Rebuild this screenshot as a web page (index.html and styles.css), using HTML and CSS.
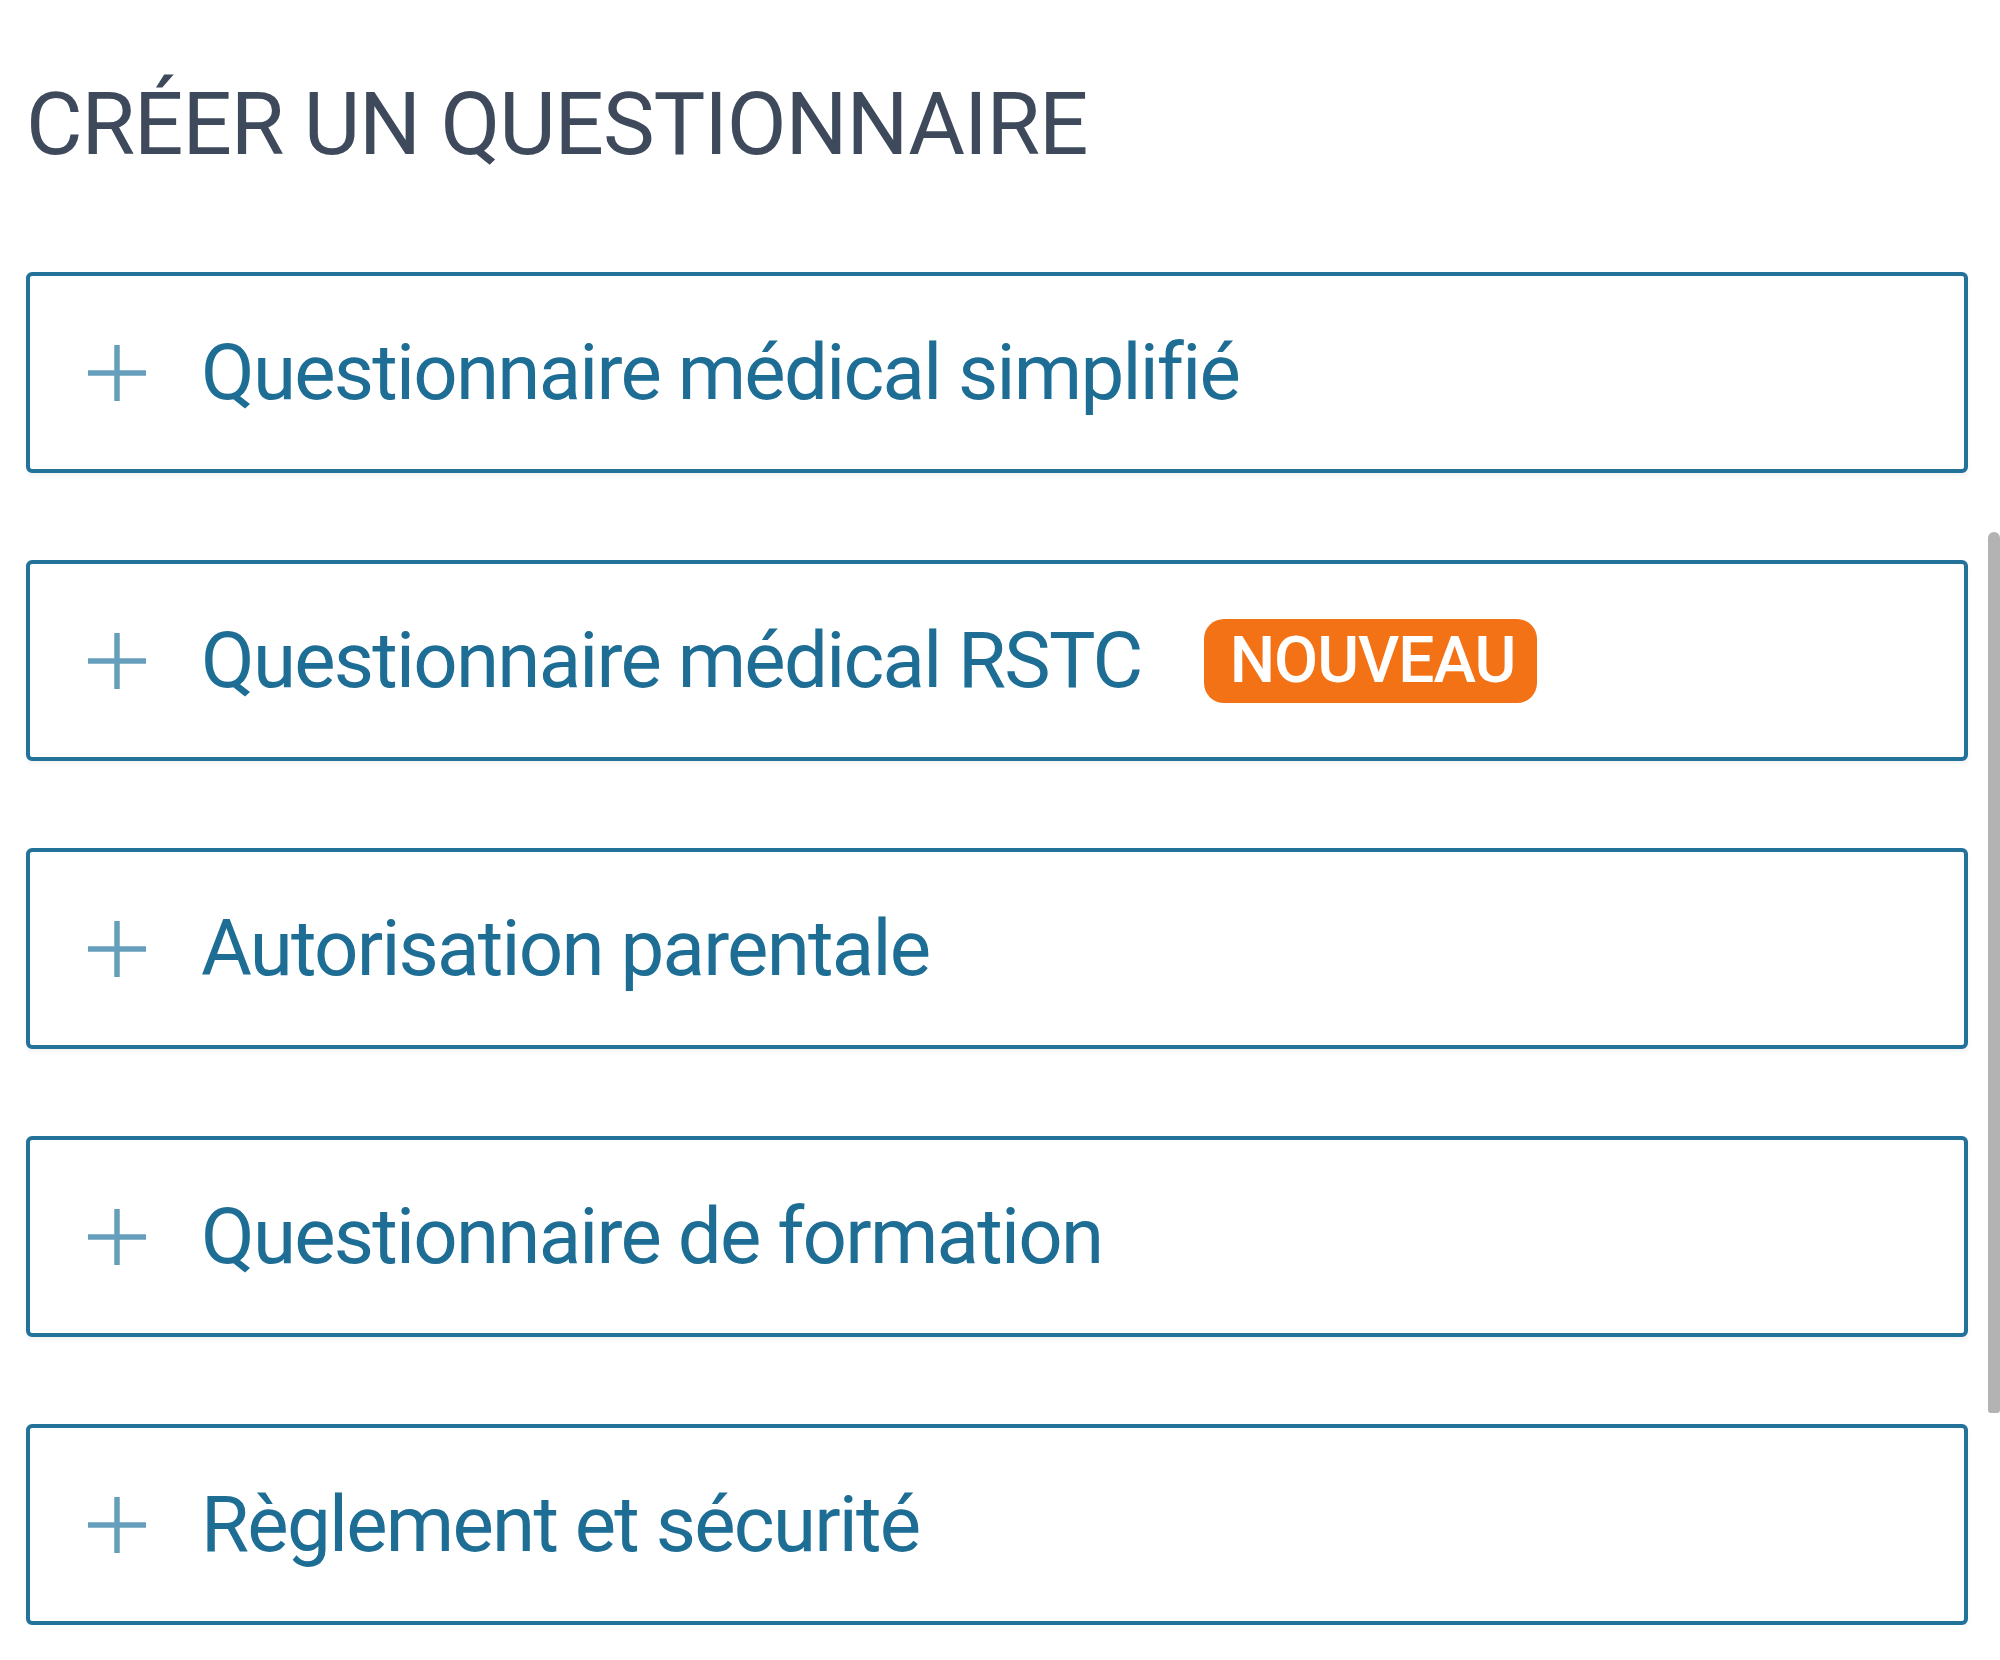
FILE: index.html
```html
<!DOCTYPE html>
<html lang="fr">
<head>
  <meta charset="UTF-8" />
  <meta name="viewport" content="width=device-width, initial-scale=1.0" />
  <title>Créer un questionnaire</title>
  <link rel="stylesheet" href="styles.css">
</head>
<body>
  <div class="container">
    <h1 class="titre">CRÉER UN QUESTIONNAIRE</h1>

    <div class="liste">
      <button type="button" class="item">
        <svg class="plus" viewBox="0 0 60 60"><path d="M30 2v56M1 30h58" /></svg>
        <span class="label">Questionnaire médical simplifié</span>
      </button>

      <button type="button" class="item">
        <svg class="plus" viewBox="0 0 60 60"><path d="M30 2v56M1 30h58" /></svg>
        <span class="label">Questionnaire médical RSTC</span>
        <span class="badge">NOUVEAU</span>
      </button>

      <button type="button" class="item">
        <svg class="plus" viewBox="0 0 60 60"><path d="M30 2v56M1 30h58" /></svg>
        <span class="label">Autorisation parentale</span>
      </button>

      <button type="button" class="item">
        <svg class="plus" viewBox="0 0 60 60"><path d="M30 2v56M1 30h58" /></svg>
        <span class="label">Questionnaire de formation</span>
      </button>

      <button type="button" class="item">
        <svg class="plus" viewBox="0 0 60 60"><path d="M30 2v56M1 30h58" /></svg>
        <span class="label">Règlement et sécurité</span>
      </button>
    </div>
  </div>

  <div class="scroll-thumb"></div>
</body>
</html>
```

FILE: styles.css
```css
body {
  margin: 0;
  font-family: Roboto, "Liberation Sans", Arial, sans-serif;
  background-color: #fff;
  color: #3e4a5b;
}

.container {
  padding: 81px 32px 0 26px;
}

.titre {
  margin: 0;
  font-size: 87px;
  font-weight: 400;
  line-height: 1;
  letter-spacing: -1.1px;
  color: #3e4a5b;
}

.liste {
  display: flex;
  flex-direction: column;
  gap: 87px;
  margin-top: 104px;
}

.item {
  display: flex;
  align-items: center;
  height: 201px;
  box-sizing: border-box;
  padding: 0 0 0 57px;
  border: 4px solid #23729a;
  border-radius: 6px;
  background: #fff;
  box-shadow: 0 3px 4px rgba(0,0,0,0.05);
  font-family: inherit;
  text-align: left;
  cursor: pointer;
}

.plus {
  width: 60px;
  height: 60px;
  flex-shrink: 0;
  margin-right: 54px;
}

.plus path {
  stroke: #669fbb;
  stroke-width: 5.5;
  fill: none;
}

.label {
  font-size: 78px;
  letter-spacing: -1.75px;
  color: #1d6d94;
  white-space: nowrap;
}

.badge {
  margin-left: 62px;
  height: 84px;
  display: inline-flex;
  align-items: center;
  padding: 0 22px 0 26px;
  border-radius: 20px;
  background-color: #f47216;
  color: #fff;
  font-size: 64px;
  font-weight: 500;
  letter-spacing: -1px;
}

.scroll-thumb {
  position: absolute;
  top: 532px;
  right: 0;
  width: 12px;
  height: 881px;
  border-radius: 6px 6px 3px 3px;
  background-color: #b3b3b3;
}
```
